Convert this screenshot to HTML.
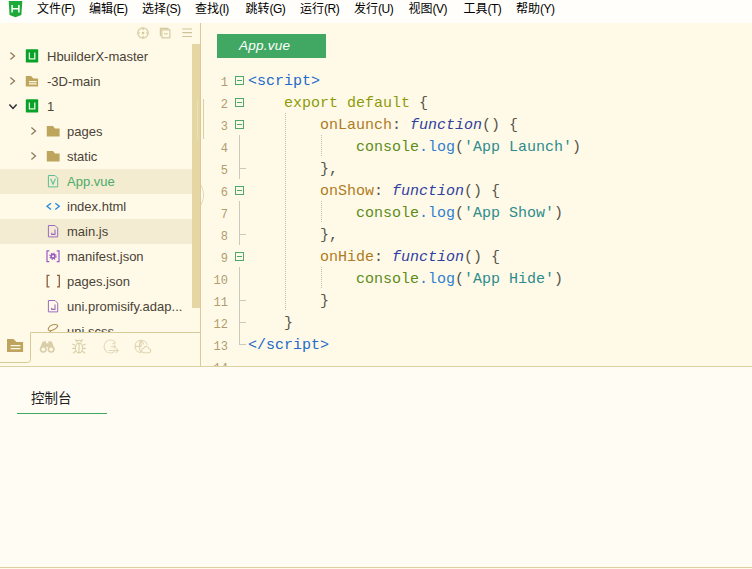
<!DOCTYPE html>
<html lang="zh"><head><meta charset="utf-8"><title>HBuilder X</title>
<style>
*{box-sizing:border-box;margin:0;padding:0}
html,body{width:752px;height:569px;overflow:hidden}
body{position:relative;background:#FFFAE8;font-family:"Liberation Sans",sans-serif;font-size:13px;color:#4a4236}
svg{display:block;overflow:visible}
/* menu bar */
#menubar{position:absolute;left:0;top:0;width:752px;height:23px;background:#FFFEFB}
#logo{position:absolute;left:8px;top:1px}
#menus{position:absolute;left:30px;top:0;height:18px;white-space:nowrap;font-size:0}
.mi{display:inline-block;padding:0 0 0 7px;height:18px;vertical-align:top;white-space:nowrap}
.mi .cjk{display:inline-block;vertical-align:top;width:24px;height:18px;font-size:12px;line-height:18px;color:#000;white-space:nowrap;font-family:"Liberation Sans","Noto Sans CJK SC",sans-serif}
.mk{display:inline-block;vertical-align:top;font-size:12px;line-height:18px;color:#000;letter-spacing:-.5px}
/* sidebar */
#sidebar{position:absolute;left:0;top:23px;width:200px;height:343px;overflow:hidden}
#sbtools{position:absolute;left:0;top:0}
#tree{position:absolute;left:0;top:21px;width:192px;height:288px;overflow:hidden}
.row{position:relative;height:25px;line-height:25px;white-space:nowrap;font-size:13px;color:#4a4236}
.row.sel{background:#F3ECD0}
.row.hov{background:#F3ECD2}
.row svg{position:absolute}
.row .chev{top:7px;width:8px;height:10px}
.row .ico{top:4px;width:16px;height:16px}
.row .lbl{position:absolute;top:0}
.l0 .chev{left:8px}.l0 .chd{left:8px;top:7px;width:10px;height:10px}.l0 .ico{left:24px}.l0 .lbl{left:47px}
.l1 .chev{left:29px}.l1 .ico{left:45px}.l1 .lbl{left:67px}
#sbthumb{position:absolute;left:192px;top:21px;width:8px;height:264px;background:#E5D6A3}
#vdiv{position:absolute;left:200px;top:23px;width:1px;height:343px;background:#D9CA9C}
#grip1{position:absolute;left:203px;top:99px;width:1px;height:40px;background:#DBCEA2}
#grip2{position:absolute;left:197px;top:99px;width:1px;height:40px;background:#EBDFB4}
#handle{position:absolute;left:201px;top:184px}
#sbtabs{position:absolute;left:0;top:309px;width:200px;height:34px;background:#FFFAE8}
/* editor */
#tab{position:absolute;left:217px;top:34px;width:109px;height:24px;background:#41A863;color:#fff;font-style:italic;font-size:13.5px;letter-spacing:.25px;line-height:24px;padding-left:22px}
#code{position:absolute;left:201px;top:69px;width:551px;height:297px;overflow:hidden;font-family:"Liberation Mono",monospace}
#guides{position:absolute;left:0;top:0}
.ln{position:relative;height:22px;line-height:22px;white-space:pre;font-size:15px}
.ln .no{position:absolute;left:0;width:27px;text-align:right;font-size:12px;color:#B09C70;top:3px}
.ln .tx{position:absolute;left:47px;top:2px}
.fold{position:absolute;left:34px;top:7px;width:9px;height:9px;border:1px solid #4FA86B}
.fold:after{content:"";position:absolute;left:1px;top:3px;width:5px;height:1px;background:#4FA86B}
.tag{color:#2369C8}.kw{color:#8E9A0A}.pn{color:#55554A}.pr{color:#B07A1E}.fn{color:#3040A0;font-style:italic}
.ob{color:#5E8C1A}.mt{color:#2F7FD0}.st{color:#2E8C8C}
/* horizontal dividers and console */
#hdiv{position:absolute;left:0;top:366px;width:752px;height:1px;background:#DDD0A3}
#console{position:absolute;left:0;top:367px;width:752px;height:200px;background:#FFFCF3}
#ctab{position:absolute;left:31px;top:25px}
#ctab .cjk{display:block;width:40.5px;height:13.5px;font-size:13.5px;line-height:13.5px;color:#222;white-space:nowrap;font-family:"Liberation Sans","Noto Sans CJK SC",sans-serif}
#cline{position:absolute;left:17px;top:46px;width:90px;height:1px;background:#41A863}
#bdiv{position:absolute;left:0;top:567px;width:752px;height:1px;background:#DDD0A3}
#status{position:absolute;left:0;top:568px;width:752px;height:1px;background:#FFFAE8}
</style></head>
<body>
<svg width="0" height="0" style="position:absolute">
  <defs>
    <symbol id="i-chr" viewBox="0 0 8 10"><path d="M2.4 1.6L6.5 5.1 2.4 8.6" fill="none" stroke="#8C7B5E" stroke-width="1.3"/></symbol>
    <symbol id="i-chd" viewBox="0 0 10 10"><path d="M1.4 3.4L5 7.4 8.6 3.4" fill="none" stroke="#2E2E33" stroke-width="1.5"/></symbol>
    <symbol id="i-uni" viewBox="0 0 16 16"><rect x="1.8" y="1.3" width="12.4" height="13.1" rx=".7" fill="#08A228"/><path d="M5.4 4.4v6.5h5.4V4.4" fill="none" stroke="#E6F7E0" stroke-width="1.3"/></symbol>
    <symbol id="i-proj" viewBox="0 0 16 16"><path d="M1.8 3h5.2l2.5 2.5h4.6v7.9H1.8z" fill="#BDA55E"/><path d="M4.9 8.6h7.7M4.9 10.9h7.7" stroke="#FFFAE8" stroke-width="1.1"/></symbol>
    <symbol id="i-folder" viewBox="0 0 16 16"><path d="M1.8 2.9h6.2l2 2.6h4.6v8H1.8z" fill="#BDA55E"/></symbol>
    <symbol id="i-vue" viewBox="0 0 16 16"><path d="M3.4 2.5H10l2.7 2.7v8.7H3.4z" fill="none" stroke="#5BBF94" stroke-width="1"/><path d="M5.6 5.7L8 11.2l2.4-5.5" fill="none" stroke="#5BBF94" stroke-width="1.1"/></symbol>
    <symbol id="i-html" viewBox="0 0 16 16"><path d="M6 5.2L2 8.3l4 3.1M10.3 5.2l4 3.1-4 3.1" fill="none" stroke="#1E8CE0" stroke-width="1.3"/></symbol>
    <symbol id="i-js" viewBox="0 0 16 16"><path d="M3.4 2.5H10l2.7 2.7v8.7H3.4z" fill="none" stroke="#9B6BC0" stroke-width="1"/><path d="M10 6.4v5H6.7V9.7" fill="none" stroke="#9B6BC0" stroke-width="1.1"/></symbol>
    <symbol id="i-manifest" viewBox="0 0 16 16"><path d="M4.3 2.8H2v10.9h2.3M11.7 2.8H14v10.9h-2.3" fill="none" stroke="#9B59C0" stroke-width="1.2"/><circle cx="8" cy="8.25" r="1.9" fill="none" stroke="#9B59C0" stroke-width="1.6"/><circle cx="8" cy="8.25" r="3.1" fill="none" stroke="#9B59C0" stroke-width="1.2" stroke-dasharray="1.22 1.22"/></symbol>
    <symbol id="i-json" viewBox="0 0 16 16"><path d="M4.5 2.4H2.2v11.4h2.3M12 2.4h2.3v11.4H12" fill="none" stroke="#8B5E3C" stroke-width="1.3"/></symbol>
    <symbol id="i-scss" viewBox="0 0 16 16"><path d="M13 2.600C11 .6 5 1.600 3.500 5.100 2.500 7.600 5 8.600 8 7.100 10.500 5.900 12.500 4.100 13 2.600M6.200 7.700C5 9 4 10.200 3.600 11.700" fill="none" stroke="#B09050" stroke-width="1.1"/></symbol>
  </defs>
</svg>

<div id="menubar">
  <svg id="logo" width="15" height="17" viewBox="0 0 15 17"><path d="M.7 0h13.6l-.9 13.900L7.500 16.200 1.600 13.900z" fill="#1DAA39"/><path d="M4.100 4v7.400M10.900 4v7.400M4.100 7.700h6.800" stroke="#fff" stroke-width="1.500" fill="none"/></svg>
  <div id="menus"><span class="mi" style="width:52px"><span class="cjk">文件</span><span class="mk">(F)</span></span><span class="mi" style="width:53px"><span class="cjk">编辑</span><span class="mk">(E)</span></span><span class="mi" style="width:53px"><span class="cjk">选择</span><span class="mk">(S)</span></span><span class="mi" style="width:50.5px"><span class="cjk">查找</span><span class="mk">(I)</span></span><span class="mi" style="width:54.5px"><span class="cjk">跳转</span><span class="mk">(G)</span></span><span class="mi" style="width:54px"><span class="cjk">运行</span><span class="mk">(R)</span></span><span class="mi" style="width:54.5px"><span class="cjk">发行</span><span class="mk">(U)</span></span><span class="mi" style="width:55px"><span class="cjk">视图</span><span class="mk">(V)</span></span><span class="mi" style="width:52.5px"><span class="cjk">工具</span><span class="mk">(T)</span></span><span class="mi" style="width:53px"><span class="cjk">帮助</span><span class="mk">(Y)</span></span></div>
</div>

<div id="sidebar">
  <svg id="sbtools" width="200" height="21" viewBox="0 23 200 21" fill="none" stroke="#D5C9A0" stroke-width="1.200">
    <circle cx="143" cy="33" r="5.200"/><path d="M143 27.800v2.400M143 35.800v2.400M137.800 33h2.400M145.800 33h2.400"/><circle cx="143" cy="33" r="1.300" fill="#D5C9A0" stroke="none"/>
    <path d="M160.400 36.200V28.300h8.200"/><rect x="161.900" y="29.800" width="8" height="8"/><path d="M164.100 33.800h3.600"/>
    <path d="M182.300 29H192M182.300 32.700H192M182.300 36.500H192" stroke="#CFC296"/>
  </svg>
  <div id="tree">
    <div class="row l0"><svg class="chev"><use href="#i-chr"/></svg><svg class="ico"><use href="#i-uni"/></svg><span class="lbl">HbuilderX-master</span></div>
    <div class="row l0"><svg class="chev"><use href="#i-chr"/></svg><svg class="ico"><use href="#i-proj"/></svg><span class="lbl">-3D-main</span></div>
    <div class="row l0"><svg class="chd"><use href="#i-chd"/></svg><svg class="ico"><use href="#i-uni"/></svg><span class="lbl">1</span></div>
    <div class="row l1"><svg class="chev"><use href="#i-chr"/></svg><svg class="ico"><use href="#i-folder"/></svg><span class="lbl">pages</span></div>
    <div class="row l1"><svg class="chev"><use href="#i-chr"/></svg><svg class="ico"><use href="#i-folder"/></svg><span class="lbl">static</span></div>
    <div class="row l1 sel"><svg class="ico"><use href="#i-vue"/></svg><span class="lbl" style="color:#4DAA6A">App.vue</span></div>
    <div class="row l1"><svg class="ico"><use href="#i-html"/></svg><span class="lbl">index.html</span></div>
    <div class="row l1 hov"><svg class="ico"><use href="#i-js"/></svg><span class="lbl">main.js</span></div>
    <div class="row l1"><svg class="ico"><use href="#i-manifest"/></svg><span class="lbl">manifest.json</span></div>
    <div class="row l1"><svg class="ico"><use href="#i-json"/></svg><span class="lbl">pages.json</span></div>
    <div class="row l1"><svg class="ico"><use href="#i-js"/></svg><span class="lbl">uni.promisify.adap...</span></div>
    <div class="row l1"><svg class="ico"><use href="#i-scss"/></svg><span class="lbl">uni.scss</span></div>
  </div>
  <div id="sbthumb"></div>
  <div id="sbtabs">
    <svg width="200" height="34" viewBox="0 0 200 34" fill="none">
      <path d="M0 30.500H27.500Q30.500 30.500 30.500 27.500V.5H200" stroke="#D8C998"/>
      <path d="M7 7h6.500l3 3h6.600v10H7z" fill="#BFA45F"/><path d="M10.600 13.600h9.800M10.600 16.600h9.800" stroke="#FFFAE8" stroke-width="1.300"/>
      <g id="ic-bino" fill="#D9CEA8"><path d="M39.600 17.500L42.200 10.600Q42.700 9.200 44.200 9.200H46v8.300zM54.800 17.500L52.200 10.600Q51.700 9.200 50.200 9.200H48.400v8.300z"/><rect x="45.500" y="11.300" width="3.400" height="3.600"/><circle cx="43.300" cy="17.300" r="3.500"/><circle cx="51.100" cy="17.300" r="3.500"/><circle cx="43.300" cy="17.300" r="1.900" fill="#FFFAE8"/><circle cx="51.100" cy="17.300" r="1.900" fill="#FFFAE8"/></g>
      <g id="ic-bug" stroke="#D9CEA8" stroke-width="1.100"><ellipse cx="79" cy="16" rx="3.600" ry="4.900"/><path d="M79 11.100v9.800M76.600 10.600a2.400 2.400 0 014.800 0M76.800 9l-1.600-1.700M81.200 9l1.600-1.700M75.400 13.600l-3-1.600M82.600 13.600l3-1.600M75.400 16.400h-3.300M82.600 16.400h3.300M75.800 19l-2.800 2.300M82.200 19l2.800 2.300"/></g>
      <g id="ic-run" stroke="#E3D9B8" stroke-width="1.100" transform="translate(0,-4)"><path d="M115.500 14.300A6.500 6.500 0 10114.800 23.400"/><path d="M108.500 22.500h9.800m-2.400-2.300l2.400 2.300-2.400 2.300M110.500 18.800h5m-1.600-1.600l1.600 1.600-1.600 1.600M112 15.700h3.300m-1.300-1.300l1.300 1.300"/></g>
      <g id="ic-globe" stroke="#E0D6B4" stroke-width="1.100"><path d="M147.200 12.800A6.200 6.200 0 10140.700 20.600"/><path d="M141.200 8.200c-2.300 3-2.300 9.400 0 12.400M141.200 8.200v6.400M135 14.400h6.400M141.200 8.200c1.600 1.600 2.300 3 2.500 4.300"/><path d="M143.300 20.700h5.400a2 2 0 00.2-4 2.700 2.700 0 00-5.200-.5 2.300 2.300 0 00-.4 4.500z" fill="#FFFAE8"/></g>
    </svg>
  </div>
</div>
<div id="vdiv"></div>
<div id="grip1"></div><div id="grip2"></div>
<svg id="handle" width="5" height="22" viewBox="0 0 5 22"><path d="M0 1Q5.200 11 0 21" fill="#FFFCF0" stroke="#DDD0A8" stroke-width=".8"/></svg>

<div id="tab">App.vue</div>
<div id="code">
<svg id="guides" width="551" height="297" viewBox="201 69 551 297" fill="none" shape-rendering="crispEdges">
  <path d="M239.500 135V179M239.500 168.500H246M239.500 201V245M239.500 234.500H246M239.500 267V344.500H246M239.500 300.500H246M239.500 322.500H246" stroke="#C9C9BD"/>
  <path d="M285.500 113V311M321.500 135V157M321.500 201V223M321.500 267V289" stroke="#BDBDB0" stroke-dasharray="1 1"/>
</svg>
<div class="ln"><span class="no">1</span><i class="fold"></i><span class="tx"><span class="tag">&lt;script&gt;</span></span></div>
<div class="ln"><span class="no">2</span><i class="fold"></i><span class="tx">    <span class="kw">export default</span> <span class="pn">{</span></span></div>
<div class="ln"><span class="no">3</span><i class="fold"></i><span class="tx">        <span class="pr">onLaunch</span><span class="pn">:</span> <span class="fn">function</span><span class="pn">() {</span></span></div>
<div class="ln"><span class="no">4</span><span class="tx">            <span class="ob">console</span><span class="mt">.log</span><span class="pn">(</span><span class="st">'App Launch'</span><span class="pn">)</span></span></div>
<div class="ln"><span class="no">5</span><span class="tx">        <span class="pn">},</span></span></div>
<div class="ln"><span class="no">6</span><i class="fold"></i><span class="tx">        <span class="pr">onShow</span><span class="pn">:</span> <span class="fn">function</span><span class="pn">() {</span></span></div>
<div class="ln"><span class="no">7</span><span class="tx">            <span class="ob">console</span><span class="mt">.log</span><span class="pn">(</span><span class="st">'App Show'</span><span class="pn">)</span></span></div>
<div class="ln"><span class="no">8</span><span class="tx">        <span class="pn">},</span></span></div>
<div class="ln"><span class="no">9</span><i class="fold"></i><span class="tx">        <span class="pr">onHide</span><span class="pn">:</span> <span class="fn">function</span><span class="pn">() {</span></span></div>
<div class="ln"><span class="no">10</span><span class="tx">            <span class="ob">console</span><span class="mt">.log</span><span class="pn">(</span><span class="st">'App Hide'</span><span class="pn">)</span></span></div>
<div class="ln"><span class="no">11</span><span class="tx">        <span class="pn">}</span></span></div>
<div class="ln"><span class="no">12</span><span class="tx">    <span class="pn">}</span></span></div>
<div class="ln"><span class="no">13</span><span class="tx"><span class="tag">&lt;/script&gt;</span></span></div>
<div class="ln"><span class="no">14</span></div>
</div>

<div id="hdiv"></div>
<div id="console">
  <div id="ctab"><span class="cjk">控制台</span></div>
  <div id="cline"></div>
</div>
<div id="bdiv"></div>
<div id="status"></div>
</body></html>
